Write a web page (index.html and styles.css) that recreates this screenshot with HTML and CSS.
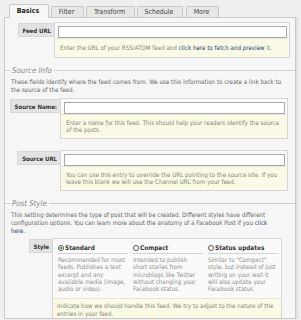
FILE: index.html
```html
<!DOCTYPE html>
<html>
<head>
<meta charset="utf-8">
<link rel="stylesheet" href="styles.css">
</head>
<body>
<div class="page">
  <ul class="tabs">
    <li class="tab active tab-basics">Basics</li>
    <li class="tab tab-filter">Filter</li>
    <li class="tab tab-transform">Transform</li>
    <li class="tab tab-schedule">Schedule</li>
    <li class="tab tab-more">More</li>
  </ul>
  <div class="panel">
    <div class="row row-feed">
      <div class="lab lab-feed"><span class="labbox">Feed URL</span></div>
      <div class="cell cell-feed">
        <div class="inp"><input type="text" class="text"></div>
        <div class="help help-one">Enter the URL of your RSS/ATOM feed and <a class="link">click here to fetch and preview</a> it.</div>
      </div>
    </div>

    <fieldset class="group group-source">
      <legend class="legend">Source Info</legend>
      <p class="desc">These fields identify where the feed comes from. We use this information to create a link back to the source of the feed.</p>
      <div class="row row-name">
        <div class="lab lab-source"><span class="labbox">Source Name:</span></div>
        <div class="cell cell-source">
          <div class="inp"><input type="text" class="text"></div>
          <div class="help">Enter a name for this feed. This should help your readers identify the source of the posts.</div>
        </div>
      </div>
      <div class="row row-url">
        <div class="lab lab-source"><span class="labbox">Source URL</span></div>
        <div class="cell cell-source">
          <div class="inp"><input type="text" class="text"></div>
          <div class="help">You can use this entry to override the URL pointing to the source site. If you leave this blank we will use the Channel URL from your feed.</div>
        </div>
      </div>
    </fieldset>

    <fieldset class="group group-style">
      <legend class="legend">Post Style</legend>
      <p class="desc">This setting determines the type of post that will be created. Different styles have different configuration options. You can learn more about the anatomy of a Facebook Post if you <a class="link">click here</a>.</p>
      <div class="row row-style">
        <div class="lab lab-style"><span class="labbox">Style</span></div>
        <div class="cell cell-style">
          <div class="options">
            <div class="option">
              <div class="opt-head"><span class="radio checked"></span>Standard</div>
              <div class="opt-desc">Recommended for most feeds. Publishes a text excerpt and any available media (image, audio or video).</div>
            </div>
            <div class="option">
              <div class="opt-head"><span class="radio"></span>Compact</div>
              <div class="opt-desc">Intended to publish short stories from microblogs like Twitter without changing your Facebook status.</div>
            </div>
            <div class="option">
              <div class="opt-head"><span class="radio"></span>Status updates</div>
              <div class="opt-desc">Similar to "Compact" style, but instead of just writing on your wall it will also update your Facebook status.</div>
            </div>
          </div>
          <div class="help help-style">Indicate how we should handle this feed. We try to adjust to the nature of the entries in your feed.</div>
        </div>
      </div>
    </fieldset>
  </div>
</div>
</body>
</html>
```

FILE: styles.css
```css
* { box-sizing: border-box; }
html, body {
  margin: 0;
  padding: 0;
  background: #efefef;
}
body {
  font-family: "DejaVu Sans Condensed", "DejaVu Sans", sans-serif;
  font-size: 6.2px;
  color: #555;
}
.page {
  padding-top: 4px;
  width: 301px;
  height: 320px;
  overflow: hidden;
}
.tabs {
  list-style: none;
  margin: 0 0 0 9px;
  padding: 0;
  display: flex;
  align-items: flex-end;
  gap: 2px;
  height: 13px;
  position: relative;
  z-index: 2;
}
.tab {
  height: 11px;
  padding: 0 2px 0 0;
  text-align: center;
  line-height: 10px;
  font-size: 7px;
  color: #444;
  background: #e7e7e7;
  border: 1px solid #c9c9c9;
  border-bottom: 0;
  border-radius: 2px 2px 0 0;
}
.tab-basics { width: 40px; }
.tab-filter { width: 33px; }
.tab-transform { width: 49px; }
.tab-schedule { width: 46px; }
.tab-more { width: 33px; margin-left: 1px; }
.tab.active {
  height: 14px;
  margin-bottom: -1px;
  line-height: 12px;
  font-weight: bold;
  color: #222;
  background: #f6f6f6;
}
.panel {
  margin-left: 4px;
  width: 292px;
  height: 302px;
  background: #f6f6f6;
  border: 1px solid #c9c9c9;
  box-shadow: 2px 0 0 #e2e2e2;
  padding-top: 4px;
  overflow: hidden;
}
.row {
  display: flex;
  align-items: flex-start;
}
.lab {
  flex: none;
  display: flex;
  justify-content: flex-end;
  padding-top: 1px;
}
.lab-feed { width: 49px; }
.lab-source { width: 55px; }
.lab-style { width: 47px; }
.labbox {
  display: block;
  height: 14px;
  line-height: 13px;
  padding: 0 3px 0 4px;
  background: #e3e3e3;
  border: 1px solid #d7d7d7;
  border-right: 0;
  font-weight: bold;
  font-size: 6px;
  color: #333;
  white-space: nowrap;
}
.cell {
  flex: 1;
  min-width: 0;
  border: 1px solid #d6d6d6;
  background: #fafafa;
}
.cell-feed { margin-right: 5px; }
.cell-source { margin-right: 7px; }
.cell-style { margin-right: 13px; }
.inp {
  padding: 3px 2px 0 3px;
}
.text {
  display: block;
  width: 100%;
  height: 12px;
  margin: 0;
  padding: 0;
  border: 1px solid #a9a9a9;
  background: #fff;
}
.help {
  background: #fafae6;
  border-top: 1px solid #e6e6d4;
  padding: 4px 3px 4px 5px;
  line-height: 7.6px;
  color: #858578;
}
.help-one { padding: 5px 5px 5px; }
.link {
  color: #1d3a6e;
}
.group {
  margin: 9px 0 0;
  padding: 0;
  border: 0;
  border-top: 1px solid #cfcfcf;
  min-width: 0;
}
.group-style { margin-top: 9px; }
.legend {
  margin-left: 5px;
  padding: 0 2px;
  font-style: italic;
  font-size: 7.8px;
  line-height: 8px;
  color: #8a8a8a;
}
.desc {
  margin: 3px 0 0;
  padding: 0 12px 0 6px;
  line-height: 8px;
  color: #666;
}
.row-name { margin-top: 4px; }
.row-url { margin-top: 11px; }
.row-style { margin-top: 3px; }
.options {
  display: grid;
  grid-template-columns: 70px 70px 70px;
  column-gap: 5px;
  padding: 5px 0 6px 5px;
}
.opt-head {
  display: flex;
  align-items: center;
  height: 10px;
  padding-bottom: 1px;
  border-bottom: 1px solid #d4d4d4;
  font-weight: bold;
  font-size: 6.4px;
  color: #333;
}
.radio {
  flex: none;
  width: 6px;
  height: 6px;
  margin-right: 1px;
  border: 1px solid #555;
  border-radius: 50%;
  background: #fff;
  display: flex;
  align-items: center;
  justify-content: center;
}
.radio.checked::after {
  content: "";
  width: 2px;
  height: 2px;
  border-radius: 50%;
  background: #2e4f3a;
}
.opt-desc {
  margin-top: 2px;
  line-height: 7.3px;
  color: #8e8e8e;
}
.help-style {
  padding: 3px 5px 2px 4px;
  line-height: 7.6px;
}
```
